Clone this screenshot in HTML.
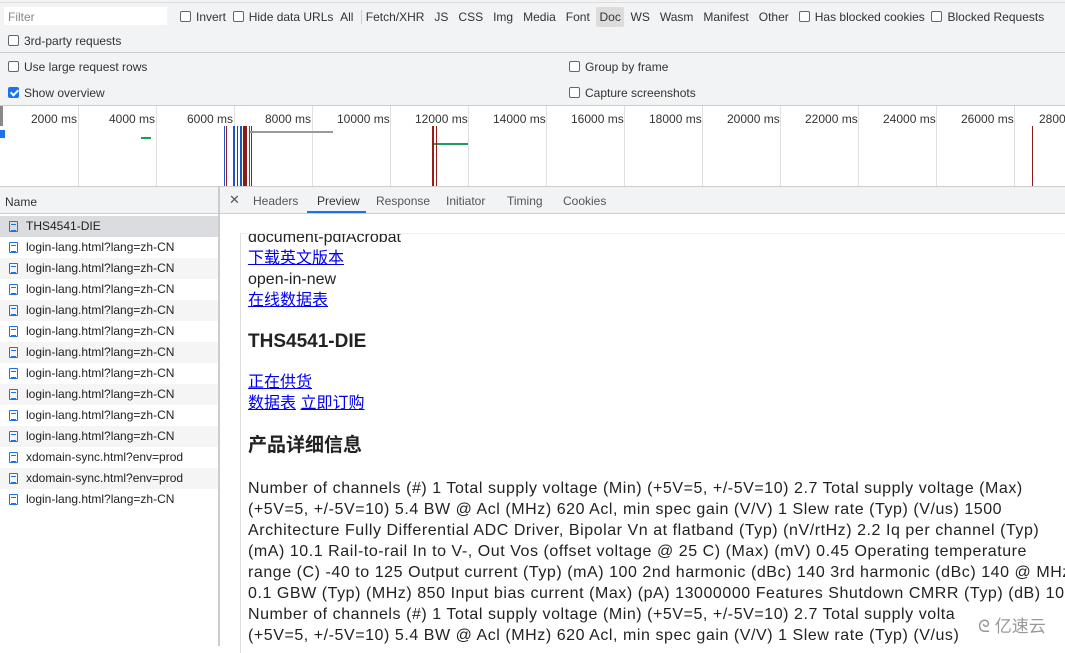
<!DOCTYPE html><html><head><style>
*{margin:0;padding:0;box-sizing:border-box}
body{width:1065px;height:646px;overflow:hidden;background:#fff;font-family:"Liberation Sans","Noto Sans CJK SC",sans-serif;font-size:12px;color:#333;position:relative}
.a{position:absolute;white-space:nowrap}
.cb{display:inline-block;width:11px;height:11px;border:1px solid #666;border-radius:2px;vertical-align:-1px;margin-right:5px;background:#fff}
.cbk{background:#1a73e8;border-color:#1a73e8;position:relative}
.cbk:after{content:"";position:absolute;left:3px;top:0;width:3px;height:6px;border:solid #fff;border-width:0 2px 2px 0;transform:rotate(45deg)}
.tl{position:absolute;top:106px;height:80px;border-left:1px solid #e0e0e0}
.ml{position:absolute;top:112px;font-size:12px;color:#333}
.row{position:absolute;left:0;width:218px;height:21px;font-size:12px;line-height:21px;padding-left:26px;color:#222}
.ic{position:absolute;left:9px;top:5px;width:9px;height:11px;border:1px solid #1a73e8;border-radius:1px}
.ic:before{content:"";position:absolute;left:1px;right:1px;top:2px;height:5px;border-top:1px solid #1a73e8;border-bottom:1px solid #1a73e8}
.pv{font-size:16px;color:#222;line-height:21px}
.pv a{color:#00e;text-decoration:underline}
.p{white-space:nowrap;letter-spacing:.55px}
</style></head><body>
<div class="a" style="left:0;top:0;width:1065px;height:106px;background:#f1f3f4"></div>
<div class="a" style="left:0;top:0;width:1065px;height:3px;border-bottom:1px solid #ddd"></div>
<div class="a" style="left:4px;top:7px;width:163px;height:18px;background:#fff;color:#888;padding:3px 4px">Filter</div>
<div class="a" style="left:180px;top:10px;color:#333"><span class="cb"></span>Invert &nbsp;<span class="cb"></span>Hide data URLs &nbsp;All <span style="border-left:1px solid #ccc;margin:0 4px"></span> Fetch/XHR &nbsp; JS &nbsp; CSS &nbsp; Img &nbsp; Media &nbsp; Font &nbsp;<span style="background:#dcdcdc;padding:3px 3px;border-radius:2px">Doc</span>&nbsp; WS &nbsp; Wasm &nbsp; Manifest &nbsp; Other &nbsp;&nbsp;<span class="cb"></span>Has blocked cookies &nbsp;<span class="cb"></span>Blocked Requests</div>
<div class="a" style="left:8px;top:34px"><span class="cb"></span>3rd-party requests</div>
<div class="a" style="left:0;top:52px;width:1065px;border-top:1px solid #ccc"></div>
<div class="a" style="left:8px;top:60px"><span class="cb"></span>Use large request rows</div>
<div class="a" style="left:8px;top:86px"><span class="cb cbk"></span>Show overview</div>
<div class="a" style="left:569px;top:60px"><span class="cb"></span>Group by frame</div>
<div class="a" style="left:569px;top:86px"><span class="cb"></span>Capture screenshots</div>
<div class="a" style="left:0;top:105px;width:1065px;border-top:1px solid #ccc"></div>
<div class="a" style="left:0;top:106px;width:3px;height:20px;background:#888"></div>
<div class="tl" style="left:78px"></div><div class="tl" style="left:156px"></div><div class="tl" style="left:234px"></div><div class="tl" style="left:312px"></div><div class="tl" style="left:390px"></div><div class="tl" style="left:468px"></div><div class="tl" style="left:546px"></div><div class="tl" style="left:624px"></div><div class="tl" style="left:702px"></div><div class="tl" style="left:780px"></div><div class="tl" style="left:858px"></div><div class="tl" style="left:936px"></div><div class="tl" style="left:1014px"></div>
<div class="ml" style="left:31px">2000 ms</div><div class="ml" style="left:109px">4000 ms</div><div class="ml" style="left:187px">6000 ms</div><div class="ml" style="left:265px">8000 ms</div><div class="ml" style="left:337px">10000 ms</div><div class="ml" style="left:415px">12000 ms</div><div class="ml" style="left:493px">14000 ms</div><div class="ml" style="left:571px">16000 ms</div><div class="ml" style="left:649px">18000 ms</div><div class="ml" style="left:727px">20000 ms</div><div class="ml" style="left:805px">22000 ms</div><div class="ml" style="left:883px">24000 ms</div><div class="ml" style="left:961px">26000 ms</div><div class="ml" style="left:1039px">2800</div>
<div class="a" style="left:0;top:130px;width:5px;height:8px;background:#1a73e8"></div>
<div class="a" style="left:141px;top:137px;width:10px;height:2px;background:#1e9e5a"></div>
<div class="a" style="left:224px;top:126px;width:1px;height:60px;background:#1a56c8"></div>
<div class="a" style="left:226px;top:126px;width:1px;height:60px;background:#9b1c1c"></div>
<div class="a" style="left:233px;top:126px;width:2px;height:60px;background:#1a56c8"></div>
<div class="a" style="left:237px;top:126px;width:1px;height:60px;background:#9b1c1c"></div>
<div class="a" style="left:240px;top:126px;width:2px;height:60px;background:#1a56c8"></div>
<div class="a" style="left:243px;top:126px;width:4px;height:60px;background:#8b1a1a"></div>
<div class="a" style="left:249px;top:126px;width:1px;height:60px;background:#1a56c8"></div>
<div class="a" style="left:251px;top:126px;width:1px;height:60px;background:#9b1c1c"></div>
<div class="a" style="left:250px;top:131px;width:83px;height:2px;background:#999"></div>
<div class="a" style="left:432px;top:143px;width:36px;height:2px;background:#1e9e5a"></div>
<div class="a" style="left:432px;top:126px;width:2px;height:60px;background:#9b1c1c"></div>
<div class="a" style="left:436px;top:126px;width:1px;height:60px;background:#9b1c1c"></div>
<div class="a" style="left:1032px;top:126px;width:1px;height:60px;background:#8b1a1a"></div>
<div class="a" style="left:0;top:186px;width:1065px;height:28px;background:#f1f3f4;border-top:1px solid #ccc;border-bottom:1px solid #ccc"></div>
<div class="a" style="left:5px;top:195px">Name</div>
<div class="a" style="left:218px;top:186px;width:2px;height:460px;background:#ccc"></div>
<div class="a" style="left:229px;top:192px;font-size:13px;color:#555">✕</div>
<div class="a" style="left:253px;top:194px;color:#555">Headers</div>
<div class="a" style="left:317px;top:194px;color:#333">Preview</div>
<div class="a" style="left:307px;top:211px;width:59px;height:2px;background:#1a73e8"></div>
<div class="a" style="left:376px;top:194px;color:#555">Response</div>
<div class="a" style="left:446px;top:194px;color:#555">Initiator</div>
<div class="a" style="left:507px;top:194px;color:#555">Timing</div>
<div class="a" style="left:563px;top:194px;color:#555">Cookies</div>
<div class="row" style="top:216px;background:#dadce0"><i class="ic"></i>THS4541-DIE</div>
<div class="row" style="top:237px"><i class="ic"></i>login-lang.html?lang=zh-CN</div>
<div class="row" style="top:258px;background:#f5f5f5"><i class="ic"></i>login-lang.html?lang=zh-CN</div>
<div class="row" style="top:279px"><i class="ic"></i>login-lang.html?lang=zh-CN</div>
<div class="row" style="top:300px;background:#f5f5f5"><i class="ic"></i>login-lang.html?lang=zh-CN</div>
<div class="row" style="top:321px"><i class="ic"></i>login-lang.html?lang=zh-CN</div>
<div class="row" style="top:342px;background:#f5f5f5"><i class="ic"></i>login-lang.html?lang=zh-CN</div>
<div class="row" style="top:363px"><i class="ic"></i>login-lang.html?lang=zh-CN</div>
<div class="row" style="top:384px;background:#f5f5f5"><i class="ic"></i>login-lang.html?lang=zh-CN</div>
<div class="row" style="top:405px"><i class="ic"></i>login-lang.html?lang=zh-CN</div>
<div class="row" style="top:426px;background:#f5f5f5"><i class="ic"></i>login-lang.html?lang=zh-CN</div>
<div class="row" style="top:447px"><i class="ic"></i>xdomain-sync.html?env=prod</div>
<div class="row" style="top:468px;background:#f5f5f5"><i class="ic"></i>xdomain-sync.html?env=prod</div>
<div class="row" style="top:489px"><i class="ic"></i>login-lang.html?lang=zh-CN</div>
<div class="a" style="left:240px;top:233px;width:830px;height:420px;border-left:1px solid #ddd;border-top:1px solid #eee;overflow:hidden">
<div class="pv" style="position:absolute;left:7px;top:-7px;width:820px;white-space:normal">
document-pdfAcrobat<br><a>下载英文版本</a><br>open-in-new<br><a>在线数据表</a>
<div style="font-weight:bold;font-size:19px;margin:19px 0 18px;line-height:24px">THS4541-DIE</div>
<a>正在供货</a><br><a>数据表</a> <a>立即订购</a>
<div style="font-weight:bold;font-size:19px;margin:20px 0 20px;line-height:24px">产品详细信息</div>
<div class="p">Number of channels (#) 1 Total supply voltage (Min) (+5V=5, +/-5V=10) 2.7 Total supply voltage (Max)<br>(+5V=5, +/-5V=10) 5.4 BW @ Acl (MHz) 620 Acl, min spec gain (V/V) 1 Slew rate (Typ) (V/us) 1500<br>Architecture Fully Differential ADC Driver, Bipolar Vn at flatband (Typ) (nV/rtHz) 2.2 Iq per channel (Typ)<br>(mA) 10.1 Rail-to-rail In to V-, Out Vos (offset voltage @ 25 C) (Max) (mV) 0.45 Operating temperature<br>range (C) -40 to 125 Output current (Typ) (mA) 100 2nd harmonic (dBc) 140 3rd harmonic (dBc) 140 @ MHz<br>0.1 GBW (Typ) (MHz) 850 Input bias current (Max) (pA) 13000000 Features Shutdown CMRR (Typ) (dB) 100<br>Number of channels (#) 1 Total supply voltage (Min) (+5V=5, +/-5V=10) 2.7 Total supply volta<br>(+5V=5, +/-5V=10) 5.4 BW @ Acl (MHz) 620 Acl, min spec gain (V/V) 1 Slew rate (Typ) (V/us)</div>
</div></div>
<div class="a" style="left:975px;top:612px;font-size:17px;color:#999;background:rgba(255,255,255,.8);padding:0 3px">ᘓ 亿速云</div>
</body></html>
